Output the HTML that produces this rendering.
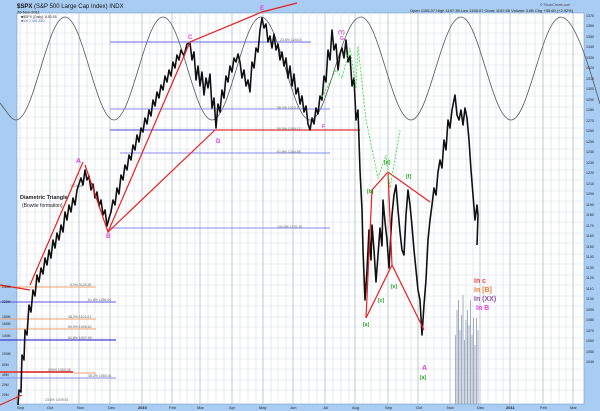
<!DOCTYPE html>
<html><head><meta charset="utf-8"><style>
body{margin:0;width:600px;height:411px;overflow:hidden;background:#fff;font-family:"Liberation Sans",sans-serif}
svg{display:block}
text{font-family:"Liberation Sans",sans-serif}
</style></head><body>
<svg width="600" height="411" viewBox="0 0 600 411" xmlns="http://www.w3.org/2000/svg">
<rect width="600" height="411" fill="#fff"/>
<rect x="0" y="0" width="600" height="13" fill="#a9cdf2"/>
<rect x="0" y="0" width="17" height="411" fill="#a9cdf2"/>
<rect x="584" y="0" width="16" height="411" fill="#a9cdf2"/>
<rect x="0" y="404" width="600" height="7" fill="#a9cdf2"/>
<rect x="17" y="13" width="567" height="391" fill="#fff" stroke="#7a9cc0" stroke-width="0.6"/>
<g stroke="#d6dde6" stroke-width="0.6">
<path d="M17 23H584M17 33H584M17 44H584M17 54H584M17 65H584M17 75H584M17 86H584M17 96H584M17 107H584M17 117H584M17 128H584M17 138H584M17 149H584M17 159H584M17 170H584M17 180H584M17 191H584M17 201H584M17 212H584M17 222H584M17 233H584M17 243H584M17 254H584M17 264H584M17 275H584M17 285H584M17 296H584M17 306H584M17 317H584M17 327H584M17 338H584M17 348H584M17 359H584M17 369H584M17 380H584M17 390H584"/>
<path d="M20 13V404M27 13V404M35 13V404M42 13V404M57 13V404M65 13V404M72 13V404M87 13V404M95 13V404M102 13V404M118 13V404M126 13V404M134 13V404M150 13V404M157 13V404M165 13V404M180 13V404M187 13V404M195 13V404M208 13V404M216 13V404M224 13V404M240 13V404M248 13V404M256 13V404M271 13V404M278 13V404M286 13V404M301 13V404M309 13V404M317 13V404M333 13V404M341 13V404M349 13V404M363 13V404M371 13V404M380 13V404M396 13V404M404 13V404M411 13V404M426 13V404M434 13V404M442 13V404M458 13V404M466 13V404M473 13V404M488 13V404M496 13V404M503 13V404M518 13V404M526 13V404M535 13V404M551 13V404M559 13V404M566 13V404"/>
</g>
<g stroke="#b7c3d2" stroke-width="0.9">
<path d="M50 13V404M79 13V404M110 13V404M142 13V404M172 13V404M200 13V404M232 13V404M263 13V404M293 13V404M325 13V404M355 13V404M388 13V404M418 13V404M450 13V404M480 13V404M510 13V404M543 13V404M573 13V404"/>
</g>
<path d="M0 103 C8 113 11 120 16 120 C34 120 47 17 65 17 C83 17 96 120 114 120 C132 120 145 17 163 17 C181 17 194 120 212 120 C230 120 243 17 261 17 C279 17 292 120 310 120 C328 120 341 17 361 17 C379 17 392 120 411 120 C429 120 442 17 461 17 C479 17 492 120 511 120 C529 120 542 17 561 17 C575 17 590 70 600 104" fill="none" stroke="#555" stroke-width="0.8"/>
<g stroke-width="1">
<path d="M110 42H311" stroke="#6a6ae8"/>
<path d="M110 109H330" stroke="#8a8af0"/>
<path d="M110 130H360" stroke="#4848d8"/>
<path d="M215 130H360" stroke="#e03030" stroke-width="1.2"/>
<path d="M120 153H330" stroke="#8a8af0"/>
<path d="M110 228H330" stroke="#8a8af0"/>
<path d="M0 287H96" stroke="#f0a070"/>
<path d="M0 302H116" stroke="#5a5ae0"/>
<path d="M0 319H96" stroke="#f0a070"/>
<path d="M0 329H96" stroke="#f0a070"/>
<path d="M0 340H116" stroke="#4040d0" stroke-width="1.3"/>
<path d="M0 372H73" stroke="#e05050" stroke-width="2"/>
<path d="M73 373H96" stroke="#f0a070"/>
<path d="M0 378H116" stroke="#8a8af0"/>
</g>
<g font-size="3.5" fill="#666">
<text x="70" y="286">0.0% 1129.29</text><text x="88" y="301">61.8% 1186.00</text>
<text x="68" y="318">38.2% 1103.21</text><text x="68" y="328">50.0% 1025.64</text>
<text x="68" y="339">61.8% 1007.45</text><text x="48" y="371">100% 1063.08</text>
<text x="88" y="377">38.2% 1050.01</text><text x="45" y="401">23.6% 1039.51</text>
<text x="280" y="41">23.6% 1244.5</text><text x="277" y="109">38.2% 1219.1</text>
<text x="277" y="130">50.0% 1250.17</text><text x="277" y="153">61.8% 1240.88</text>
<text x="277" y="228">100.0% 1176.30</text><text x="70" y="187">1219.66</text>
</g>
<g fill="#7d90ab" opacity="0.7">
<rect x="455" y="335" width="1" height="69"/><rect x="456.5" y="310" width="1" height="94"/><rect x="458" y="300" width="1" height="104"/><rect x="459.5" y="330" width="1" height="74"/><rect x="461" y="315" width="1" height="89"/><rect x="462.5" y="295" width="1" height="109"/><rect x="464" y="340" width="1" height="64"/><rect x="465.5" y="320" width="1" height="84"/><rect x="467" y="310" width="1" height="94"/><rect x="468.5" y="325" width="1" height="79"/><rect x="470" y="300" width="1" height="104"/><rect x="471.5" y="335" width="1" height="69"/><rect x="473" y="318" width="1" height="86"/><rect x="474.5" y="345" width="1" height="59"/><rect x="476" y="318" width="1" height="86"/><rect x="477.5" y="330" width="1" height="74"/>
</g>
<path d="M18 405 L19 390 L21 392 L22 355 L24 360 L25 330 L27 335 L29 305 L31 312 L33 290 L35 296 L37 275 L39 282 L41 268 L43 274 L45 258 L47 265 L49 250 L51 258 L53 240 L55 248 L57 233 L59 240 L61 225 L63 232 L65 212 L67 220 L69 205 L71 212 L73 198 L75 205 L77 190 L79 184 L81 178 L83 185 L85 170 L87 180 L89 176 L91 190 L93 184 L95 198 L97 192 L99 206 L101 200 L103 215 L105 210 L107 226 L109 218 L111 212 L113 200 L115 205 L117 188 L119 194 L121 175 L123 180 L125 165 L127 170 L129 155 L131 160 L133 145 L135 150 L137 135 L139 142 L141 128 L143 132 L145 118 L147 124 L149 110 L151 116 L153 100 L155 106 L157 92 L159 98 L161 85 L163 90 L165 76 L167 82 L169 70 L171 76 L173 62 L175 68 L177 55 L179 60 L181 50 L184 56 L187 44 L190 43 L192 60 L194 52 L196 80 L198 66 L200 86 L202 72 L204 95 L206 78 L208 88 L210 74 L212 108 L214 98 L216 128 L218 104 L220 112 L222 90 L224 98 L226 76 L228 82 L230 66 L232 72 L234 58 L236 62 L238 54 L240 62 L242 78 L244 70 L246 86 L248 80 L250 92 L252 62 L254 68 L256 48 L258 52 L260 30 L262 18 L264 28 L266 24 L268 42 L270 36 L272 48 L274 34 L276 50 L278 44 L280 60 L282 52 L284 66 L286 58 L288 78 L290 66 L292 86 L294 74 L296 94 L298 88 L300 104 L302 96 L304 112 L306 106 L308 124 L310 130 L312 118 L314 124 L316 108 L318 114 L320 96 L322 100 L324 76 L326 82 L328 50 L330 60 L332 30 L334 50 L336 44 L338 70 L340 54 L342 48 L344 58 L346 40 L348 62 L350 56 L352 86 L354 78 L356 120 L358 110 L360 170 L362 210 L363 250 L365 300 L367 270 L369 230 L371 260 L372 225 L374 250 L376 282 L378 255 L380 228 L382 246 L383 200 L385 222 L387 240 L389 268 L391 232 L392 215 L394 195 L396 185 L398 210 L400 232 L402 250 L404 255 L406 215 L408 190 L410 205 L412 226 L414 250 L416 270 L418 290 L420 300 L422 335 L424 305 L426 280 L428 240 L430 220 L432 205 L434 188 L436 195 L438 172 L440 160 L442 168 L444 140 L446 150 L448 120 L450 128 L452 110 L454 100 L455 95 L457 115 L459 120 L461 110 L463 125 L465 108 L467 118 L469 140 L471 170 L473 195 L475 220 L477 205 L478 215 L477 245" fill="none" stroke="#111" stroke-width="1.6" stroke-linejoin="round"/>
<g stroke="#e62020" stroke-width="1.2" fill="none">
<path d="M0 405 L22 395"/>
<path d="M0 285 L30 290"/>
<path d="M30 285 L83 162"/>
<path d="M85 165 L108 232 L190 42 L262 12 L297 3"/>
<path d="M108 232 L215 130"/>
<path d="M366 318 L372 190 L388 172 L430 202"/>
<path d="M366 318 L392 265 L424 330"/>
<path d="M392 265 L388 172"/>
</g>
<path d="M322 97 L336 70 L342 78 L350 48 L356 88 L358 46 L366 120 L378 178 L386 155 L390 188 L400 130" fill="none" stroke="#44dd44" stroke-width="0.9" stroke-dasharray="2 1.5"/>
<g font-size="7" font-weight="bold">
<text x="76" y="163" fill="#e040e0">A</text>
<text x="106" y="238" fill="#e040e0" font-size="6">B</text>
<text x="188" y="39" fill="#e040e0" font-size="6">C</text>
<text x="216" y="143" fill="#e040e0" font-size="6">D</text>
<text x="260" y="10" fill="#e040e0" font-size="6">E</text>
<text x="322" y="128" fill="#e040e0" font-size="5">F</text>
<text x="340" y="40" fill="#e040e0" font-size="5">G</text>
<text x="338" y="34" fill="#c050c0" font-size="5">(Y)</text>
<text x="422" y="370" fill="#e040e0">A</text>
<text x="420" y="379" fill="#22aa22" font-size="5">[a]</text>
<text x="363" y="326" fill="#22aa22" font-size="5">[a]</text>
<text x="378" y="302" fill="#22aa22" font-size="5">[c]</text>
<text x="391" y="288" fill="#22aa22" font-size="5">[e]</text>
<text x="367" y="193" fill="#22aa22" font-size="5">[b]</text>
<text x="384" y="164" fill="#22aa22" font-size="5">[d]</text>
<text x="406" y="178" fill="#22aa22" font-size="5">[f]</text>
<text x="474" y="283" fill="#f04040">In c</text>
<text x="474" y="292" fill="#f07830">In [B]</text>
<text x="474" y="301" fill="#9050a0">In (XX)</text>
<text x="476" y="310" fill="#e040e0">In B</text>
</g>
<text x="20" y="199" font-size="5.5" font-weight="bold" fill="#222">Diametric Triangle</text>
<text x="22" y="207" font-size="5" fill="#222">(Bowtie formation)</text>
<text x="17" y="8" font-size="6" fill="#111"><tspan font-weight="bold">$SPX</tspan> (S&amp;P 500 Large Cap Index) INDX</text>
<text x="17" y="13.5" font-size="4" fill="#111">26-Nov-2011</text>
<text x="21" y="18" font-size="3.5" fill="#333">■$SPX (Daily) 1192.55</text>
<text x="21" y="22" font-size="3.5" fill="#4466bb">■Vol 2,401,840</text>
<text x="410" y="12" font-size="4" fill="#111">Open 1155.07 High 1197.35 Low 1155.07 Close 1192.55 Volume 3.0B Chg +33.60 (+2.92%)</text>
<text x="540" y="6" font-size="3.5" fill="#445">© StockCharts.com</text>
<g font-size="3.6" fill="#222">
<text x="586" y="17">1370</text><text x="586" y="27">1360</text><text x="586" y="38">1350</text><text x="586" y="48">1340</text><text x="586" y="59">1330</text><text x="586" y="69">1320</text><text x="586" y="80">1310</text><text x="586" y="90">1300</text><text x="586" y="101">1290</text><text x="586" y="111">1280</text><text x="586" y="122">1270</text><text x="586" y="132">1260</text><text x="586" y="143">1250</text><text x="586" y="153">1240</text><text x="586" y="164">1230</text><text x="586" y="174">1220</text><text x="586" y="185">1210</text><text x="586" y="195">1200</text><text x="586" y="206">1190</text><text x="586" y="216">1180</text><text x="586" y="227">1170</text><text x="586" y="237">1160</text><text x="586" y="248">1150</text><text x="586" y="258">1140</text><text x="586" y="269">1130</text><text x="586" y="279">1120</text><text x="586" y="290">1110</text><text x="586" y="300">1100</text><text x="586" y="311">1090</text><text x="586" y="321">1080</text><text x="586" y="332">1070</text><text x="586" y="342">1060</text><text x="586" y="353">1050</text><text x="586" y="363">1040</text>
</g>
<g font-size="3.4" fill="#222">
<text x="2" y="288">240M</text><text x="2" y="303">220M</text><text x="2" y="318">180M</text><text x="2" y="325">160M</text><text x="2" y="337">140M</text><text x="2" y="355">100M</text><text x="2" y="366">60M</text><text x="2" y="376">40M</text><text x="2" y="386">20M</text><text x="2" y="396">20M</text>
</g>
<g font-size="4" fill="#222">
<text x="17" y="409">Sep</text><text x="47" y="409">Oct</text><text x="77" y="409">Nov</text><text x="108" y="409">Dec</text><text x="138" y="409" font-weight="bold">2010</text><text x="169" y="409">Feb</text><text x="197" y="409">Mar</text><text x="229" y="409">Apr</text><text x="259" y="409">May</text><text x="290" y="409">Jun</text><text x="323" y="409">Jul</text><text x="352" y="409">Aug</text><text x="385" y="409">Sep</text><text x="416" y="409">Oct</text><text x="447" y="409">Nov</text><text x="477" y="409">Dec</text><text x="506" y="409" font-weight="bold">2011</text><text x="540" y="409">Feb</text><text x="570" y="409">Mar</text>
</g>
</svg>
</body></html>
